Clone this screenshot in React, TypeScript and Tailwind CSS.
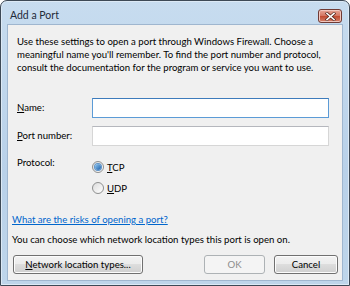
import React from "react";

const font = { fontFamily: 'Lato, "Liberation Sans", sans-serif' };

function Radio({ checked }: { checked: boolean }) {
  return (
    <span className="relative inline-flex h-[12px] w-[12px] items-center justify-center rounded-full border border-[#8e8f8f] bg-gradient-to-br from-[#dcdcdc] to-[#ffffff]">
      {checked && (
        <span className="h-[6px] w-[6px] rounded-full bg-gradient-to-br from-[#8fc8f2] to-[#1a5fa8] shadow-[0_0_0_1px_#5e94c9]" />
      )}
    </span>
  );
}

function Btn({ children, w, disabled }: { children: React.ReactNode; w: string; disabled?: boolean }) {
  return (
    <div
      className={
        "flex h-[19px] items-center justify-center rounded-[3px] border " +
        w +
        (disabled
          ? " border-[#adb2b5] bg-[#f4f4f4] text-[#8d8d8d]"
          : " border-[#707070] bg-[linear-gradient(#f2f2f2_0%,#ebebeb_50%,#dddddd_50%,#cfcfcf_100%)] text-black shadow-[inset_0_0_0_1px_#fcfcfc]")
      }
    >
      {children}
    </div>
  );
}

export default function App() {
  return (
    <div className="h-[286px] w-[350px] overflow-hidden bg-white" style={font}>
      <div className="flex h-[286px] w-full flex-col rounded-t-[7px] border border-[#3d4956] bg-[linear-gradient(#c7dcef,#b9d1e9_60%,#bed5ea)] px-[6px] pb-[4px] shadow-[inset_0_0_0_1px_#dce9f5]">
        <div className="flex h-[23px] shrink-0 items-start justify-between pl-[3px] pr-[1px]">
          <span className="mt-[8px] text-[10.5px] leading-[13px] text-[#1e2a38]">Add a Port</span>
          <div className="mt-[8px] flex h-[14px] w-[24px] items-center justify-center rounded-[3px] border border-[#6f3a34] bg-[linear-gradient(#e7a597,#d4745f_50%,#c0472d_50%,#d5836c)] shadow-[inset_0_0_0_1px_#f1c6bd]">
            <svg width="11" height="9" viewBox="0 0 11 9">
              <path d="M2 1.5 L9 7.5 M9 1.5 L2 7.5" stroke="#5a2b22" strokeWidth="3" strokeLinecap="square" />
              <path d="M2 1.5 L9 7.5 M9 1.5 L2 7.5" stroke="#ffffff" strokeWidth="1.6" strokeLinecap="square" />
            </svg>
          </div>
        </div>
        <div className="flex min-h-0 flex-1 flex-col border border-[#9fb6cf] bg-[#f0f0f0] pl-[4px] pr-[4px] text-[9.6px] leading-[13px] text-black">
          <p className="mt-[9.5px] whitespace-nowrap pl-[5px]">
            Use these settings to open a port through Windows Firewall. Choose a<br />
            meaningful name you'll remember. To find the port number and protocol,<br />
            consult the documentation for the program or service you want to use.
          </p>
          <div className="mt-[24px] flex items-center pl-[5px] pr-[9px]">
            <span className="w-[75px]">
              <u>N</u>ame:
            </span>
            <div className="h-[20px] flex-1 border border-[#5c9bd6] border-t-[#3d7bbb] bg-white" />
          </div>
          <div className="mt-[8px] flex items-center pl-[5px] pr-[9px]">
            <span className="w-[75px]">
              <u>P</u>ort number:
            </span>
            <div className="h-[20px] flex-1 border border-[#d6d6d6] border-t-[#b5b7bd] bg-white" />
          </div>
          <div className="mt-[10px] flex pl-[5px]">
            <span className="w-[75px]">Protocol:</span>
            <div className="mt-[5px] flex flex-col gap-[8px]">
              <div className="flex h-[13px] items-center gap-[3px]">
                <Radio checked />
                <span>
                  <u>T</u>CP
                </span>
              </div>
              <div className="flex h-[13px] items-center gap-[3px]">
                <Radio checked={false} />
                <span>
                  <u>U</u>DP
                </span>
              </div>
            </div>
          </div>
          <a className="mt-[18px] text-[#0066cc] underline">What are the risks of opening a port?</a>
          <p className="mt-[7px] whitespace-nowrap">You can choose which network location types this port is open on.</p>
          <div className="mt-[9px] flex items-center pl-[1px]">
            <Btn w="w-[130px]">
              <span>
                <u>N</u>etwork location types...
              </span>
            </Btn>
            <div className="flex-1" />
            <Btn w="w-[61px]" disabled>
              OK
            </Btn>
            <div className="w-[9px]" />
            <Btn w="w-[64px]">Cancel</Btn>
          </div>
        </div>
      </div>
    </div>
  );
}
